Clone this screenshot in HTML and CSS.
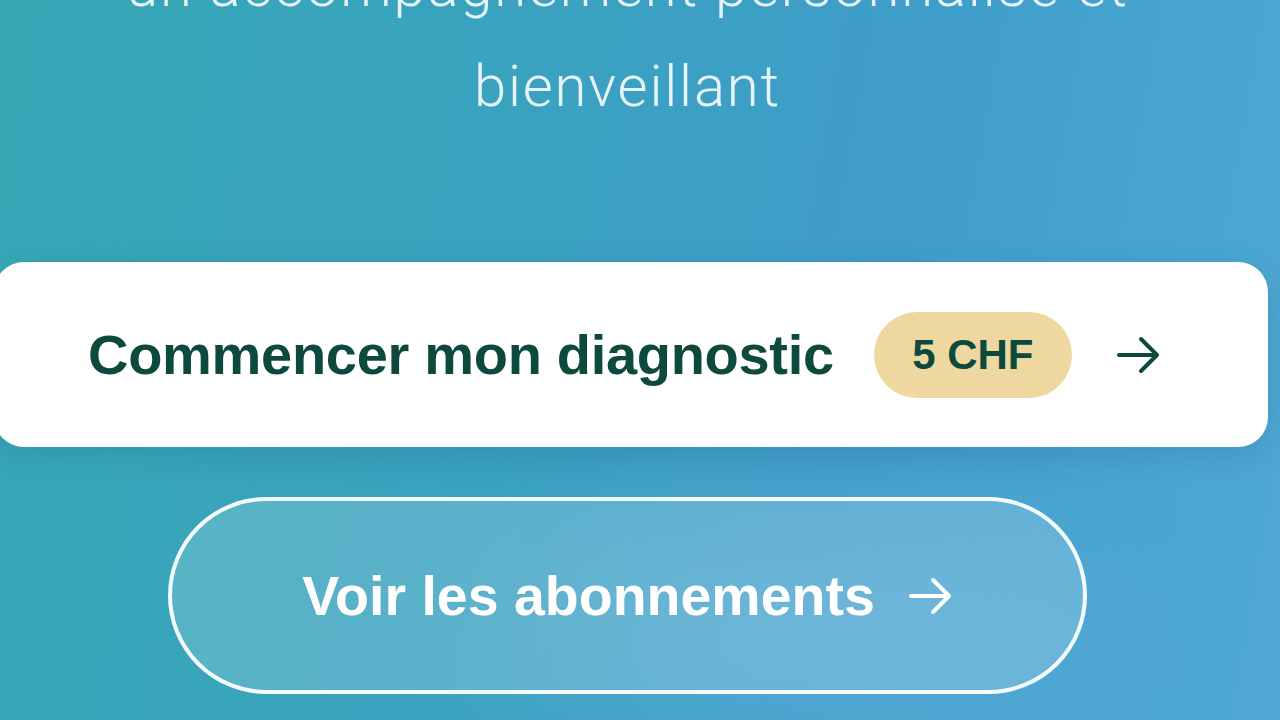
FILE: index.html
```html
<!DOCTYPE html>
<html lang="fr">
<head>
<meta charset="utf-8">
<link rel="stylesheet" href="styles.css">
</head>
<body>
<main class="hero">
  <p class="lead">un accompagnement personnalisé et<br>bienveillant</p>
  <a class="cta-primary" href="#">
    <span class="cta-label">Commencer mon diagnostic</span>
    <span class="price">5 CHF</span>
    <svg class="arrow" width="46" height="40" viewBox="0 0 46 40" fill="none" stroke="currentColor" stroke-width="4" stroke-linecap="round" stroke-linejoin="round"><path d="M4 20H42M26 4L42 20L26 36"/></svg>
  </a>
  <a class="cta-secondary" href="#">
    <span>Voir les abonnements</span>
    <svg class="arrow" width="46" height="40" viewBox="0 0 46 40" fill="none" stroke="currentColor" stroke-width="4" stroke-linecap="round" stroke-linejoin="round"><path d="M4 20H42M26 4L42 20L26 36"/></svg>
  </a>
</main>
</body>
</html>
```
FILE: styles.css
```css
html, body {
  margin: 0;
  height: 100%;
  overflow: hidden;
}
body {
  background:
    radial-gradient(ellipse 600px 300px at 800px 640px, rgba(120, 190, 225, 0.35), rgba(120, 190, 225, 0) 70%),
    linear-gradient(100deg, #36a8b5 0%, #3aa2c0 40%, #3f9dca 65%, #4fa9d4 100%);
  font-family: "Liberation Sans", Arial, sans-serif;
}
.hero {
  width: 1255px;
  display: flex;
  flex-direction: column;
  align-items: center;
}
.lead {
  margin: -64px 0 0;
  font-family: Roboto, "Liberation Sans", sans-serif;
  font-weight: 300;
  font-size: 58px;
  letter-spacing: 1.8px;
  line-height: 100px;
  color: #e6f4f8;
  text-align: center;
  white-space: nowrap;
}
.cta-primary {
  box-sizing: border-box;
  align-self: flex-start;
  margin: 126px 0 0 -6px;
  width: 1274px;
  height: 185px;
  background: #fff;
  border-radius: 30px;
  display: flex;
  align-items: center;
  padding-left: 94px;
  text-decoration: none;
  color: #0d4a3d;
  box-shadow: 0 8px 30px rgba(20, 70, 110, 0.18);
}
.cta-label {
  font-weight: 700;
  font-size: 56px;
  letter-spacing: -0.3px;
}
.price {
  margin-left: 40px;
  width: 198px;
  height: 86px;
  border-radius: 43px;
  background: #eed8a0;
  display: flex;
  align-items: center;
  justify-content: center;
  font-weight: 700;
  font-size: 42px;
}
.cta-primary .arrow {
  margin-left: 43px;
}
.cta-secondary {
  box-sizing: border-box;
  margin-top: 50px;
  width: 919px;
  height: 197px;
  border: 4px solid #f4fbfd;
  border-radius: 99px;
  background: rgba(255, 255, 255, 0.16);
  display: flex;
  align-items: center;
  justify-content: center;
  gap: 32px;
  text-decoration: none;
  color: #fff;
  font-weight: 700;
  font-size: 55.5px;
}
```
